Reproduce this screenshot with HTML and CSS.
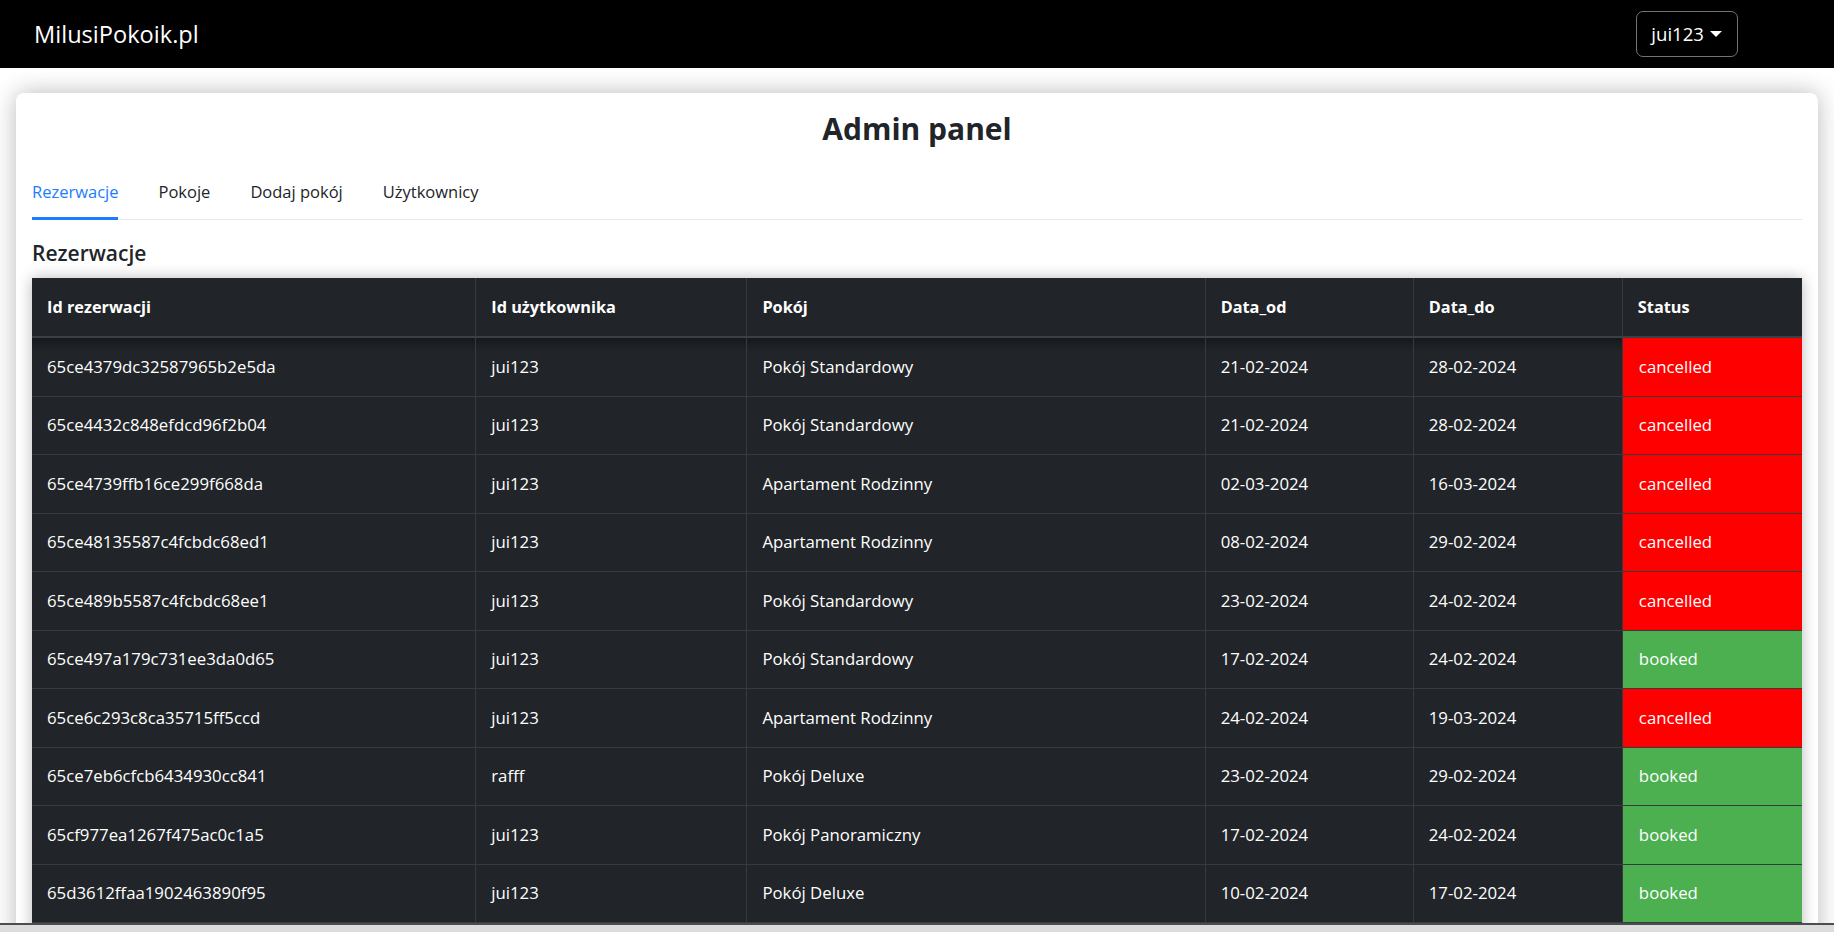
FILE: index.html
```html
<!DOCTYPE html>
<html lang="pl">
<head>
<meta charset="utf-8">
<title>MilusiPokoik.pl – Admin panel</title>
<link rel="stylesheet" href="styles.css">
</head>
<body>
<nav class="navbar">
  <a class="brand" href="#">MilusiPokoik.pl</a>
  <button class="user-btn" type="button">jui123<span class="caret"></span></button>
</nav>

<main class="card">
  <h1 class="title">Admin panel</h1>
  <ul class="tabs">
    <li class="tab active">Rezerwacje</li>
    <li class="tab">Pokoje</li>
    <li class="tab">Dodaj pokój</li>
    <li class="tab">Użytkownicy</li>
  </ul>
  <h2 class="section-title">Rezerwacje</h2>
  <table class="res-table">
    <colgroup>
      <col class="c1"><col class="c2"><col class="c3"><col class="c4"><col class="c5"><col class="c6">
    </colgroup>
    <thead>
      <tr><th>Id rezerwacji</th><th>Id użytkownika</th><th>Pokój</th><th>Data_od</th><th>Data_do</th><th>Status</th></tr>
    </thead>
    <tbody>
      <tr class="first-row"><td>65ce4379dc32587965b2e5da</td><td>jui123</td><td>Pokój Standardowy</td><td>21-02-2024</td><td>28-02-2024</td><td class="status cancelled">cancelled</td></tr>
      <tr><td>65ce4432c848efdcd96f2b04</td><td>jui123</td><td>Pokój Standardowy</td><td>21-02-2024</td><td>28-02-2024</td><td class="status cancelled">cancelled</td></tr>
      <tr><td>65ce4739ffb16ce299f668da</td><td>jui123</td><td>Apartament Rodzinny</td><td>02-03-2024</td><td>16-03-2024</td><td class="status cancelled">cancelled</td></tr>
      <tr><td>65ce48135587c4fcbdc68ed1</td><td>jui123</td><td>Apartament Rodzinny</td><td>08-02-2024</td><td>29-02-2024</td><td class="status cancelled">cancelled</td></tr>
      <tr><td>65ce489b5587c4fcbdc68ee1</td><td>jui123</td><td>Pokój Standardowy</td><td>23-02-2024</td><td>24-02-2024</td><td class="status cancelled">cancelled</td></tr>
      <tr><td>65ce497a179c731ee3da0d65</td><td>jui123</td><td>Pokój Standardowy</td><td>17-02-2024</td><td>24-02-2024</td><td class="status booked">booked</td></tr>
      <tr><td>65ce6c293c8ca35715ff5ccd</td><td>jui123</td><td>Apartament Rodzinny</td><td>24-02-2024</td><td>19-03-2024</td><td class="status cancelled">cancelled</td></tr>
      <tr><td>65ce7eb6cfcb6434930cc841</td><td>rafff</td><td>Pokój Deluxe</td><td>23-02-2024</td><td>29-02-2024</td><td class="status booked">booked</td></tr>
      <tr><td>65cf977ea1267f475ac0c1a5</td><td>jui123</td><td>Pokój Panoramiczny</td><td>17-02-2024</td><td>24-02-2024</td><td class="status booked">booked</td></tr>
      <tr><td>65d3612ffaa1902463890f95</td><td>jui123</td><td>Pokój Deluxe</td><td>10-02-2024</td><td>17-02-2024</td><td class="status booked">booked</td></tr>
      <tr class="empty-row"><td></td><td></td><td></td><td></td><td></td><td class="status cancelled"></td></tr>
    </tbody>
  </table>
</main>

<div class="bottom-bar"></div>
</body>
</html>
```

FILE: styles.css
```css
html {
  overflow: hidden;
}

body {
  margin: 0;
  background: #ffffff;
  font-family: "Open Sans", "Liberation Sans", sans-serif;
  color: #212529;
}

/* ---------- navbar ---------- */
.navbar {
  height: 68px;
  background: #000000;
  display: flex;
  align-items: center;
  justify-content: space-between;
  padding: 0 96px 0 34px;
}

.brand {
  color: #ffffff;
  text-decoration: none;
  font-size: 23.6px;
  line-height: 30px;
}

.user-btn {
  display: inline-flex;
  align-items: center;
  height: 46px;
  padding: 0 15px 0 14px;
  background: transparent;
  border: 1px solid #6c757d;
  border-radius: 7px;
  color: #ffffff;
  font-family: "Open Sans", "Liberation Sans", sans-serif;
  font-size: 18.6px;
  line-height: 28px;
}

.caret {
  display: inline-block;
  margin-left: 6px;
  width: 0;
  height: 0;
  border-top: 6px solid #ffffff;
  border-left: 6px solid transparent;
  border-right: 6px solid transparent;
}

/* ---------- card ---------- */
.card {
  margin: 25px 16px 0;
  padding: 18px 16px 40px;
  background: #ffffff;
  border-radius: 8px;
  box-shadow: 0 0 24px rgba(0, 0, 0, 0.28);
}

.title {
  margin: 0 0 21px;
  text-align: center;
  font-size: 30px;
  line-height: 36px;
  font-weight: 700;
  color: #212529;
}

/* ---------- tabs ---------- */
.tabs {
  list-style: none;
  margin: 0;
  padding: 0;
  display: flex;
  gap: 40px;
  border-bottom: 1px solid #e6e8ea;
}

.tab {
  padding: 12px 0 13px;
  margin-bottom: -1px;
  font-size: 16.5px;
  line-height: 24px;
  color: #212529;
  border-bottom: 3px solid transparent;
}

.tab.active {
  color: #1a7dff;
  border-bottom-color: #1a7dff;
}

.section-title {
  margin: 21px 0 12px;
  font-size: 21px;
  line-height: 25px;
  font-weight: 600;
  color: #212529;
}

/* ---------- table ---------- */
.res-table {
  width: 100%;
  table-layout: fixed;
  border-collapse: separate;
  border-spacing: 0;
  background: #212529;
  color: #ffffff;
  box-shadow: 0 0 14px rgba(0, 0, 0, 0.28);
}

.c1 { width: 444px; }
.c2 { width: 271px; }
.c3 { width: 458px; }
.c4 { width: 208px; }
.c5 { width: 209px; }
.c6 { width: 179px; }

.res-table th,
.res-table td {
  text-align: left;
  padding: 0 15px;
  border-right: 1px solid #373b3e;
  white-space: nowrap;
  overflow: hidden;
}

.res-table th:last-child,
.res-table td:last-child {
  border-right: none;
}

.res-table th {
  padding-top: 17px;
  padding-bottom: 17px;
  font-size: 16.3px;
  line-height: 24px;
  font-weight: 700;
  border-bottom: 2px solid #3b4046;
}

.res-table td {
  padding-top: 16.75px;
  padding-bottom: 16.75px;
  font-size: 16.8px;
  line-height: 24px;
  border-bottom: 1px solid #373b3e;
}

.res-table .empty-row td {
  height: 24px;
}

.res-table .first-row td {
  background-image: linear-gradient(rgba(0, 0, 0, 0.32), rgba(0, 0, 0, 0) 14px);
}

.res-table td.status {
  padding-left: 16px;
  background-image: none;
}

.status.cancelled {
  background-color: #ff0000;
}

.status.booked {
  background-color: #4caf50;
}

/* ---------- window bottom edge ---------- */
.bottom-bar {
  position: fixed;
  left: 0;
  right: 0;
  bottom: 0;
  height: 7px;
  background: #dcdcdc;
  border-top: 2px solid #4a4d51;
}
```
